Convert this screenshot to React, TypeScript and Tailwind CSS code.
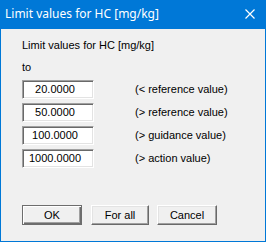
export default function App() {
  const rows = [
    { value: "20.0000", label: "(< reference value)" },
    { value: "50.0000", label: "(> reference value)" },
    { value: "100.0000", label: "(> guidance value)" },
    { value: "1000.0000", label: "(> action value)" },
  ];

  const btn =
    "h-[20px] flex items-center justify-center bg-[#f0f0f0] text-black border border-t-white border-l-white border-r-[#696969] border-b-[#696969] shadow-[inset_-1px_-1px_#a0a0a0,inset_1px_1px_#e3e3e3]";

  return (
    <div className="w-[266px] h-[243px] bg-white">
      <div className="w-[266px] h-[242px] flex flex-col bg-[#f0f0f0] border border-t-0 border-[#0078d7] font-['Liberation_Sans',Arial,sans-serif] text-[11px] leading-[13px] text-black">
        {/* Title bar */}
        <div className="-mx-px h-[29px] shrink-0 bg-[#0078d7] flex items-center justify-between pl-[5px] pr-[11px]">
          <span className="font-['Noto_Sans',sans-serif] text-[12px] text-white leading-none pb-[1px]">
            Limit values for HC [mg/kg]
          </span>
          <svg width="10" height="10" viewBox="0 0 10 10" className="mt-[-1px]">
            <path d="M0.5 0.5L9.5 9.5M9.5 0.5L0.5 9.5" stroke="white" strokeWidth="1.2" />
          </svg>
        </div>

        {/* Body */}
        <div className="flex-1 flex flex-col pl-[21px] pt-[10px]">
          <div>Limit values for HC [mg/kg]</div>
          <div className="mt-[9px]">to</div>

          <div className="mt-[6px] flex flex-col gap-[4px]">
            {rows.map((r) => (
              <div key={r.value} className="flex items-center">
                <div className="w-[72px] h-[19px] bg-white border border-t-[#a0a0a0] border-l-[#a0a0a0] border-r-white border-b-white shadow-[inset_1px_1px_#696969,inset_-1px_-1px_#e3e3e3] flex items-center justify-center pr-[6px]">
                  {r.value}
                </div>
                <div className="ml-[41px]">{r.label}</div>
              </div>
            ))}
          </div>

          <div className="mt-[37px] flex">
            <div className="w-[60px] h-[20px] flex items-center justify-center bg-[#f0f0f0] border border-[#6d6d6d] shadow-[inset_1px_1px_#ffffff,inset_-1px_-1px_#6d6d6d,inset_-2px_-2px_#a0a0a0]">
              OK
            </div>
            <div className={`${btn} w-[58px] ml-[9px]`}>For all</div>
            <div className={`${btn} w-[60px] ml-[8px]`}>Cancel</div>
          </div>
        </div>
      </div>
    </div>
  );
}
